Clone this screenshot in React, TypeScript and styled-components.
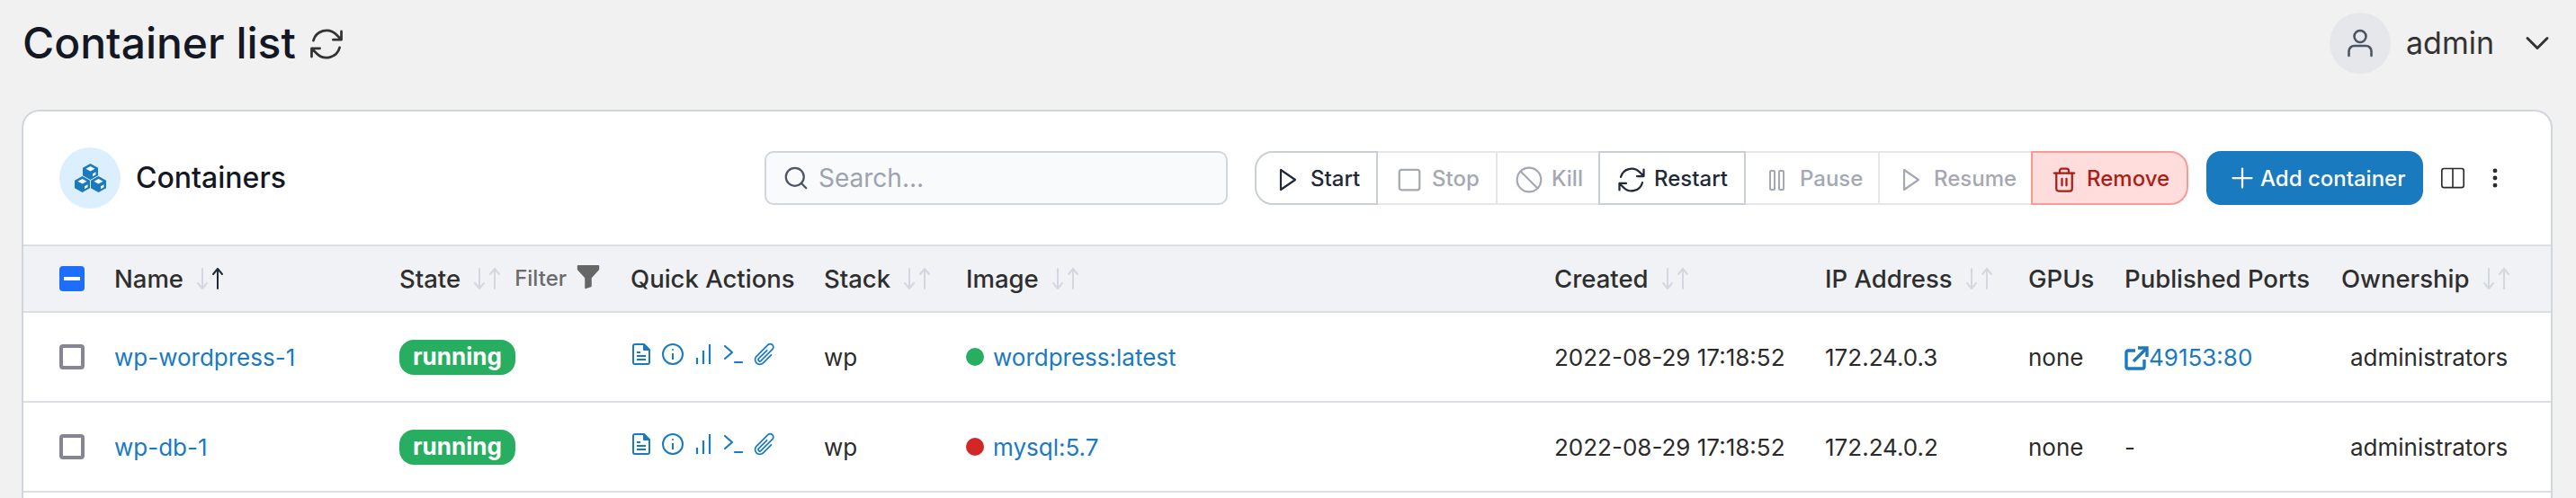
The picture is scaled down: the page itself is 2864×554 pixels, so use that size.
import React from 'react'
import styled, { createGlobalStyle } from 'styled-components'
import { Search, Plus, ChevronDown, Ban, Square, Trash2 } from 'lucide-react'
import { HiOutlineArrowPath, HiOutlinePaperClip } from 'react-icons/hi2'
import { BsFunnelFill, BsLayoutSplit, BsThreeDotsVertical } from 'react-icons/bs'

const GlobalStyle = createGlobalStyle`
  html, body {
    margin: 0;
    height: 100%;
    overflow: hidden;
    background: #f1f1f1;
  }
  body {
    font-family: Inter, "Liberation Sans", sans-serif;
    color: #2b2b2b;
  }
`

const BLUE = '#1a7abf'
const COLUMNS = '61px 317px 257px 215px 158px 654px 301px 226px 107px 241px 1fr'

const Page = styled.div`
  height: 100vh;
  display: flex;
  flex-direction: column;
  overflow: hidden;
`

const TopBar = styled.header`
  flex: 0 0 122px;
  display: flex;
  align-items: center;
  padding: 0 21px 26px 25px;
  box-sizing: border-box;
`

const PageTitle = styled.h1`
  margin: 0;
  font-size: 48px;
  line-height: 58px;
  font-weight: 500;
  color: #141824;
`

const TitleRefresh = styled(HiOutlineArrowPath)`
  width: 44px;
  height: 44px;
  margin: 2px 0 0 12px;
  color: #333;
`

const UserMenu = styled.div`
  margin-left: auto;
  display: flex;
  align-items: center;
`

const Avatar = styled.div`
  width: 68px;
  height: 68px;
  border-radius: 50%;
  background: #e5e7eb;
  display: flex;
  align-items: center;
  justify-content: center;
  color: #4b5563;
`

const UserName = styled.span`
  margin-left: 17px;
  font-size: 34px;
  line-height: 40px;
  color: #333;
`

const UserChevron = styled(ChevronDown)`
  width: 44px;
  height: 44px;
  margin-left: 26px;
  stroke-width: 1.6;
  color: #333;
`

const Card = styled.section`
  flex: 1;
  margin: 0 26px 0 24px;
  background: #fff;
  border: 2px solid #d1d5de;
  border-bottom: 0;
  border-radius: 20px 20px 0 0;
`

const Toolbar = styled.div`
  height: 148px;
  display: flex;
  align-items: center;
  padding: 0 49px 0 40px;
  border-bottom: 2px solid #dcdee3;
`

const CardHeading = styled.div`
  flex: 1;
  display: flex;
  align-items: center;
  gap: 17px;
`

const CardIcon = styled.div`
  width: 68px;
  height: 68px;
  border-radius: 50%;
  background: #dcefff;
  display: flex;
  align-items: center;
  justify-content: center;
`

const CardTitle = styled.h2`
  margin: 0;
  font-size: 32px;
  line-height: 40px;
  font-weight: 500;
  color: #141824;
`

const SearchBox = styled.div`
  width: 515px;
  height: 60px;
  box-sizing: border-box;
  display: flex;
  align-items: center;
  gap: 10px;
  padding: 0 18px;
  background: #f9fafb;
  border: 2px solid #d1d5de;
  border-radius: 10px;
  color: #4b5563;
`

const SearchInput = styled.input`
  flex: 1;
  min-width: 0;
  border: 0;
  outline: 0;
  padding: 0;
  background: transparent;
  font: 400 28px Inter, sans-serif;
  &::placeholder {
    color: #9ca3af;
    opacity: 1;
  }
`

const ActionGroup = styled.div`
  display: flex;
  margin-left: 30px;
`

const ActionButton = styled.button<{ $width: number; $tone: 'on' | 'off' | 'danger'; $pos?: 'first' | 'last' }>`
  width: ${p => p.$width}px;
  height: 60px;
  box-sizing: border-box;
  margin: 0 0 0 ${p => (p.$pos === 'first' ? 0 : -2)}px;
  padding: 0 0 0 21px;
  display: flex;
  align-items: center;
  gap: 11px;
  font: 500 24px Inter, sans-serif;
  background: ${p => (p.$tone === 'danger' ? '#fedddc' : '#fff')};
  color: ${p => (p.$tone === 'on' ? '#1f2937' : p.$tone === 'off' ? '#a4a8b2' : '#ab1e16')};
  border: 2px solid ${p => (p.$tone === 'on' ? '#c9ced8' : p.$tone === 'off' ? '#e5e7eb' : '#f99a94')};
  border-radius: ${p => (p.$pos === 'first' ? '20px 0 0 20px' : p.$pos === 'last' ? '0 20px 20px 0' : '0')};
  position: relative;
  z-index: ${p => (p.$tone === 'off' ? 0 : 1)};
`

const IconSlot = styled.span`
  flex: 0 0 28px;
  min-width: 0;
  width: 28px;
  display: flex;
  justify-content: center;
  margin-top: 4px;
  svg {
    flex: none;
  }
`

const AddButton = styled.button`
  width: 241px;
  height: 60px;
  margin-left: 20px;
  padding: 0 0 0 22px;
  border: 0;
  border-radius: 16px;
  background: ${BLUE};
  color: #fff;
  display: flex;
  align-items: center;
  gap: 2px;
  font: 500 24px Inter, sans-serif;
`

const TableTools = styled.div`
  display: flex;
  align-items: center;
  margin-left: 20px;
  gap: 21px;
  color: #2b2b2b;
`

const Row = styled.div<{ $head?: boolean }>`
  display: grid;
  grid-template-columns: ${COLUMNS};
  align-items: center;
  height: ${p => (p.$head ? 72 : 98)}px;
  padding-left: 40px;
  background: ${p => (p.$head ? '#f0f2f6' : '#fff')};
  border-bottom: 2px solid #dcdee3;
  font-size: 26px;
  line-height: 36px;
`

const HeadCell = styled.div`
  display: flex;
  align-items: center;
  font-size: 27.5px;
  font-weight: 500;
  color: #2e2e2e;
  white-space: nowrap;
`

const Cell = styled.div<{ $indent?: number }>`
  display: flex;
  align-items: center;
  white-space: nowrap;
  color: #2b2b2b;
  padding: 2px 0 0 ${p => p.$indent ?? 0}px;
`

const StateCell = styled.div`
  display: flex;
  align-items: center;
`

const Check = styled.span<{ $mixed?: boolean }>`
  width: 28px;
  height: 28px;
  box-sizing: border-box;
  border-radius: 4px;
  display: flex;
  align-items: center;
  justify-content: center;
  background: ${p => (p.$mixed ? '#1d6ffb' : '#fff')};
  border: ${p => (p.$mixed ? '0' : '4px solid #858593')};
  &::after {
    content: '';
    display: ${p => (p.$mixed ? 'block' : 'none')};
    width: 18px;
    height: 4px;
    background: #fff;
  }
`

const SortIcon = styled.svg`
  width: 32px;
  height: 26px;
  margin-left: 14px;
  fill: none;
  stroke-width: 2;
  stroke-linecap: round;
  stroke-linejoin: round;
`

const FilterLabel = styled.span`
  margin-left: 14px;
  font-size: 24px;
  color: #6b6b6b;
`

const FilterIcon = styled(BsFunnelFill)`
  width: 30px;
  height: 30px;
  margin: -4px 0 0 9px;
  color: #666;
`

const Link = styled.a`
  color: ${BLUE};
  text-decoration: none;
`

const Badge = styled.span`
  display: inline-flex;
  align-items: center;
  height: 39px;
  padding: 0 15px;
  border-radius: 16px;
  background: #27ae60;
  color: #fff;
  font-size: 26px;
  font-weight: 700;
`

const QuickActions = styled.div`
  display: flex;
  align-items: center;
  gap: 13px;
  color: ${BLUE};
  margin: -7px 0 0 2px;
`

const ClipIcon = styled(HiOutlinePaperClip)`
  width: 28px;
  height: 28px;
  margin-left: -3px;
`

const Dot = styled.span<{ $color: string }>`
  width: 20px;
  height: 20px;
  margin: -2px 10px 0 0;
  border-radius: 50%;
  background: ${p => p.$color};
`

const SortArrows = ({ active }: { active?: boolean }) => (
  <SortIcon viewBox="0 0 32 26">
    <path d="M7 2v22M2 18l5 6 5-6" stroke="#d3d7df" />
    <path d="M24 24V2M19 8l5-6 5 6" stroke={active ? '#1f2937' : '#d3d7df'} />
  </SortIcon>
)

const PlayIcon = () => (
  <svg width="20" height="26" viewBox="0 0 20 26" fill="none" stroke="currentColor" strokeWidth="2.200" strokeLinejoin="round">
    <path d="M2 2l16 11L2 24z" />
  </svg>
)

const PauseIcon = () => (
  <svg width="20" height="26" viewBox="0 0 20 26" fill="none" stroke="currentColor" strokeWidth="2">
    <rect x="2" y="3" width="5" height="21" rx="1" />
    <rect x="12" y="3" width="5" height="21" rx="1" />
  </svg>
)

const UserIcon = () => (
  <svg width="30" height="32" viewBox="0 0 30 32" fill="none" stroke="currentColor" strokeWidth="2.600" strokeLinecap="round">
    <circle cx="15" cy="8.500" r="6.500" />
    <path d="M2.500 30v-5a6 6 0 0 1 6-6h13a6 6 0 0 1 6 6v5" />
  </svg>
)

const Cube = ({ x, y }: { x: number; y: number }) => (
  <g transform={`translate(${x} ${y})`}>
    <path d="M9 0l8.500 4.700v8.600L9 18 .5 13.300V4.700z" fill={BLUE} />
    <path d="M9 3l5 2.700L9 8.400 4 5.700z" fill="#fff" />
    <path d="M15 9.200v3l-3.500 2v-3z" fill="#fff" />
  </g>
)

const CubesIcon = () => (
  <svg width="37" height="32" viewBox="0 0 37 32">
    <Cube x={9.500} y={0} />
    <Cube x={0.500} y={14} />
    <Cube x={18.500} y={14} />
  </svg>
)

const DocIcon = () => (
  <svg width="20" height="24" viewBox="0 0 20 24" fill="none" stroke="currentColor" strokeWidth="2" strokeLinejoin="round">
    <path d="M3 1h10l6 6v14a2 2 0 0 1-2 2H3a2 2 0 0 1-2-2V3a2 2 0 0 1 2-2z" />
    <path d="M13 1v6h6" fill="currentColor" />
    <path d="M5 10h4M5 14h10M5 18h10" />
  </svg>
)

const InfoIcon = () => (
  <svg width="24" height="24" viewBox="0 0 24 24" fill="none" stroke="currentColor" strokeWidth="2">
    <circle cx="12" cy="12" r="11" />
    <path d="M12 11v7" />
    <circle cx="12" cy="7" r="1" fill="currentColor" stroke="none" />
  </svg>
)

const BarsIcon = () => (
  <svg width="18" height="24" viewBox="0 0 18 24" fill="none" stroke="currentColor" strokeWidth="2.200">
    <path d="M2 16v7M9 8v15M16 1v22" />
  </svg>
)

const TerminalIcon = () => (
  <svg width="22" height="24" viewBox="0 0 22 24" fill="none" stroke="currentColor" strokeWidth="2.200" strokeLinecap="round" strokeLinejoin="round">
    <path d="M2 3l8 7-8 7" />
    <path d="M13 21h8" />
  </svg>
)

const PortIcon = () => (
  <svg width="27" height="27" viewBox="0 0 27 27" fill="none" stroke={BLUE} strokeWidth="3.400">
    <path d="M12 5H4a2 2 0 0 0-2 2v16a2 2 0 0 0 2 2h16a2 2 0 0 0 2-2v-8" />
    <path d="M10 17L24 3" />
    <path d="M15 2h10v10" />
  </svg>
)

const actions = [
  { label: 'Start', width: 137, tone: 'on', pos: 'first', icon: <PlayIcon /> },
  { label: 'Stop', width: 135, tone: 'off', icon: <Square size={30} strokeWidth={1.800} /> },
  { label: 'Kill', width: 116, tone: 'off', icon: <Ban size={32} strokeWidth={1.600} /> },
  { label: 'Restart', width: 164, tone: 'on', icon: <HiOutlineArrowPath size={36} /> },
  { label: 'Pause', width: 151, tone: 'off', icon: <PauseIcon /> },
  { label: 'Resume', width: 172, tone: 'off', icon: <PlayIcon /> },
  { label: 'Remove', width: 175, tone: 'danger', pos: 'last', icon: <Trash2 size={30} strokeWidth={1.800} /> },
] as const

const containers = [
  { name: 'wp-wordpress-1', image: 'wordpress:latest', dot: '#27ae60', ip: '172.24.0.3', port: '49153:80' },
  { name: 'wp-db-1', image: 'mysql:5.7', dot: '#d12727', ip: '172.24.0.2', port: '' },
]

export default function App() {
  return (
    <Page>
      <GlobalStyle />
      <TopBar>
        <PageTitle>Container list</PageTitle>
        <TitleRefresh />
        <UserMenu>
          <Avatar><UserIcon /></Avatar>
          <UserName>admin</UserName>
          <UserChevron />
        </UserMenu>
      </TopBar>
      <Card>
        <Toolbar>
          <CardHeading>
            <CardIcon><CubesIcon /></CardIcon>
            <CardTitle>Containers</CardTitle>
          </CardHeading>
          <SearchBox>
            <Search size={30} strokeWidth={1.800} />
            <SearchInput placeholder="Search..." />
          </SearchBox>
          <ActionGroup>
            {actions.map(a => (
              <ActionButton key={a.label} $width={a.width} $tone={a.tone} $pos={'pos' in a ? a.pos : undefined}>
                <IconSlot>{a.icon}</IconSlot>
                {a.label}
              </ActionButton>
            ))}
          </ActionGroup>
          <AddButton><Plus size={36} strokeWidth={1.500} />Add container</AddButton>
          <TableTools>
            <BsLayoutSplit size={26} />
            <BsThreeDotsVertical size={26} />
          </TableTools>
        </Toolbar>
        <Row $head>
          <Check $mixed />
          <HeadCell>Name<SortArrows active /></HeadCell>
          <HeadCell>State<SortArrows /><FilterLabel>Filter</FilterLabel><FilterIcon /></HeadCell>
          <HeadCell>Quick Actions</HeadCell>
          <HeadCell>Stack<SortArrows /></HeadCell>
          <HeadCell>Image<SortArrows /></HeadCell>
          <HeadCell>Created<SortArrows /></HeadCell>
          <HeadCell>IP Address<SortArrows /></HeadCell>
          <HeadCell>GPUs</HeadCell>
          <HeadCell>Published Ports</HeadCell>
          <HeadCell>Ownership<SortArrows /></HeadCell>
        </Row>
        {containers.map(c => (
          <Row key={c.name}>
            <Check />
            <Cell><Link href="#">{c.name}</Link></Cell>
            <StateCell><Badge>running</Badge></StateCell>
            <QuickActions>
              <DocIcon />
              <InfoIcon />
              <BarsIcon />
              <TerminalIcon />
              <ClipIcon />
            </QuickActions>
            <Cell>wp</Cell>
            <Cell><Dot $color={c.dot} /><Link href="#">{c.image}</Link></Cell>
            <Cell>2022-08-29 17:18:52</Cell>
            <Cell>{c.ip}</Cell>
            <Cell>none</Cell>
            <Cell>
              {c.port ? <><PortIcon /><Link href="#">{c.port}</Link></> : '-'}
            </Cell>
            <Cell $indent={10}>administrators</Cell>
          </Row>
        ))}
      </Card>
    </Page>
  )
}
